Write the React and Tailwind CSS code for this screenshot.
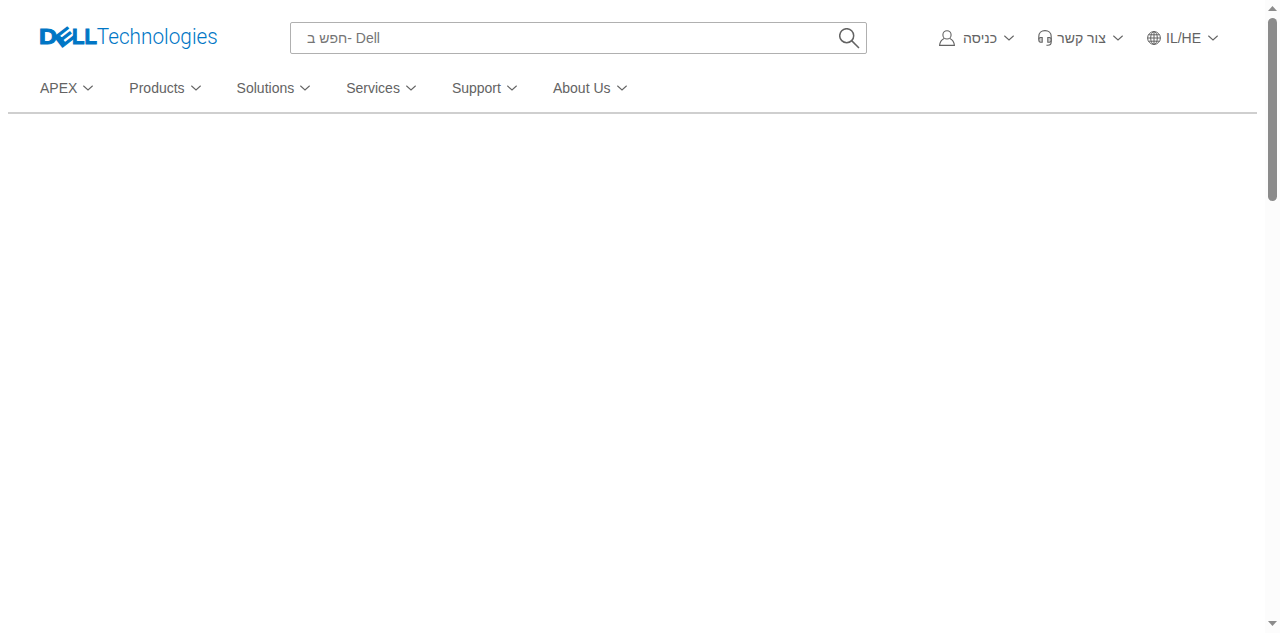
const navItems = ['APEX', 'Products', 'Solutions', 'Services', 'Support', 'About Us']

function Chevron() {
  return (
    <svg className="w-[10px] h-[6px] shrink-0" viewBox="0 0 10 6" fill="none" stroke="#636363" strokeWidth="1.15">
      <path d="M0.3 0.8 L5 4.9 L9.7 0.8" />
    </svg>
  )
}

function Logo() {
  return (
    <svg className="w-[184px] h-8 shrink-0 overflow-visible" viewBox="0 0 184 32" fill="#0076c5">
      <g fontFamily="Liberation Sans" fontWeight="700" fontSize="22.5" stroke="#0076c5" strokeWidth="1">
        <text x="-1" y="22.4" textLength="18" lengthAdjust="spacingAndGlyphs">D</text>
        <text x="-10" y="6.6" fontSize="19" textLength="19.5" lengthAdjust="spacingAndGlyphs" transform="translate(24.8 14.8) rotate(-38)">E</text>
        <text x="32" y="22.4" textLength="25" lengthAdjust="spacingAndGlyphs">LL</text>
      </g>
      <text x="56.8" y="22.4" fontFamily="Roboto" fontWeight="300" fontSize="22.5" textLength="121" lengthAdjust="spacingAndGlyphs">Technologies</text>
    </svg>
  )
}

function UserIcon() {
  return (
    <svg className="w-4 h-4 shrink-0" viewBox="0 0 16 16" fill="none" stroke="#636363" strokeWidth="1.1">
      <circle cx="8" cy="4.9" r="4.1" />
      <path d="M5.2 8.4 C2.7 9.4 0.9 11.9 0.6 15.4 H15.4 C15.1 11.9 13.3 9.4 10.8 8.4" />
    </svg>
  )
}

function HeadsetIcon() {
  return (
    <svg className="w-[14px] h-4 shrink-0" viewBox="0 0 14 16" fill="none" stroke="#636363" strokeWidth="1.1">
      <path d="M0.8 9.5 V6.4 C0.8 2.9 3.4 0.6 7 0.6 S13.2 2.9 13.2 6.4 V12 C13.2 14.2 12 15.3 9.8 15.3 H8.4" />
      <path d="M4.2 7.5 H2.6 C1.4 7.5 0.8 8.3 0.8 9.8 S1.4 12.2 2.6 12.2 H4.2 Z" fill="#d5d5d5" />
      <path d="M9.8 7.5 H11.4 C12.6 7.5 13.2 8.3 13.2 9.8 S12.6 12.2 11.4 12.2 H9.8 Z" fill="#d5d5d5" />
    </svg>
  )
}

function GlobeIcon() {
  return (
    <svg className="w-[14px] h-[14px] shrink-0" viewBox="0 0 14 14" fill="none" stroke="#636363" strokeWidth="1">
      <circle cx="7" cy="7" r="6.4" />
      <ellipse cx="7" cy="7" rx="3.3" ry="6.4" />
      <path d="M7 0.6 V13.4 M0.6 7 H13.4 M1.5 3.8 H12.5 M1.5 10.2 H12.5" />
    </svg>
  )
}

export default function App() {
  return (
    <div className="flex h-[633px] overflow-hidden bg-white text-[14px] leading-5 text-[#636363] font-['Liberation_Sans',Arial,sans-serif]">
      <header className="ml-2 w-[1249px] h-[114px] shrink-0 border-b-2 border-[#cfcfcf]">
        <div className="flex items-center h-8 mt-[22px] pl-8">
          <Logo />
          <div className="ml-[66px] flex items-center justify-between w-[577px] h-8 shrink-0 border border-[#b0b0b0] rounded-[2px] pl-4 pr-[6px]">
            <span className="text-[#757575]">חפש ב- Dell</span>
            <svg className="w-[21px] h-[21px]" viewBox="0 0 21 21" fill="none" stroke="#636363" strokeWidth="1.5">
              <circle cx="7.7" cy="7.7" r="7" />
              <path d="M12.6 12.6 L20 20" />
            </svg>
          </div>
          <button className="ml-[72px] flex items-center">
            <UserIcon />
            <span className="ml-2 mr-[7px] w-[34px] whitespace-nowrap">כניסה</span>
            <Chevron />
          </button>
          <button className="ml-6 flex items-center">
            <HeadsetIcon />
            <span className="ml-[5px] mr-[7px] w-[49px] whitespace-nowrap">צור קשר</span>
            <Chevron />
          </button>
          <button className="ml-6 flex items-center">
            <GlobeIcon />
            <span className="ml-[5px] mr-[7px] whitespace-nowrap">IL/HE</span>
            <Chevron />
          </button>
        </div>
        <nav className="flex items-center gap-9 mt-6 pl-8">
          {navItems.map((item) => (
            <button key={item} className="flex items-center gap-[6px] whitespace-nowrap">
              {item}
              <Chevron />
            </button>
          ))}
        </nav>
      </header>

      {/* scrollbar */}
      <div className="ml-auto w-[15px] shrink-0 flex flex-col items-center bg-[#fcfcfc]">
        <svg className="mt-[6px] w-[9px] h-[5px] shrink-0" viewBox="0 0 9 5" fill="#8b8b8b"><path d="M0 5 L4.5 0 L9 5 Z" /></svg>
        <div className="mt-[7px] w-[9px] h-[183px] rounded-full bg-[#8b8b8b]" />
        <svg className="mt-auto mb-[7px] w-[9px] h-[5px] shrink-0" viewBox="0 0 9 5" fill="#8b8b8b"><path d="M0 0 L4.5 5 L9 0 Z" /></svg>
      </div>
    </div>
  )
}
